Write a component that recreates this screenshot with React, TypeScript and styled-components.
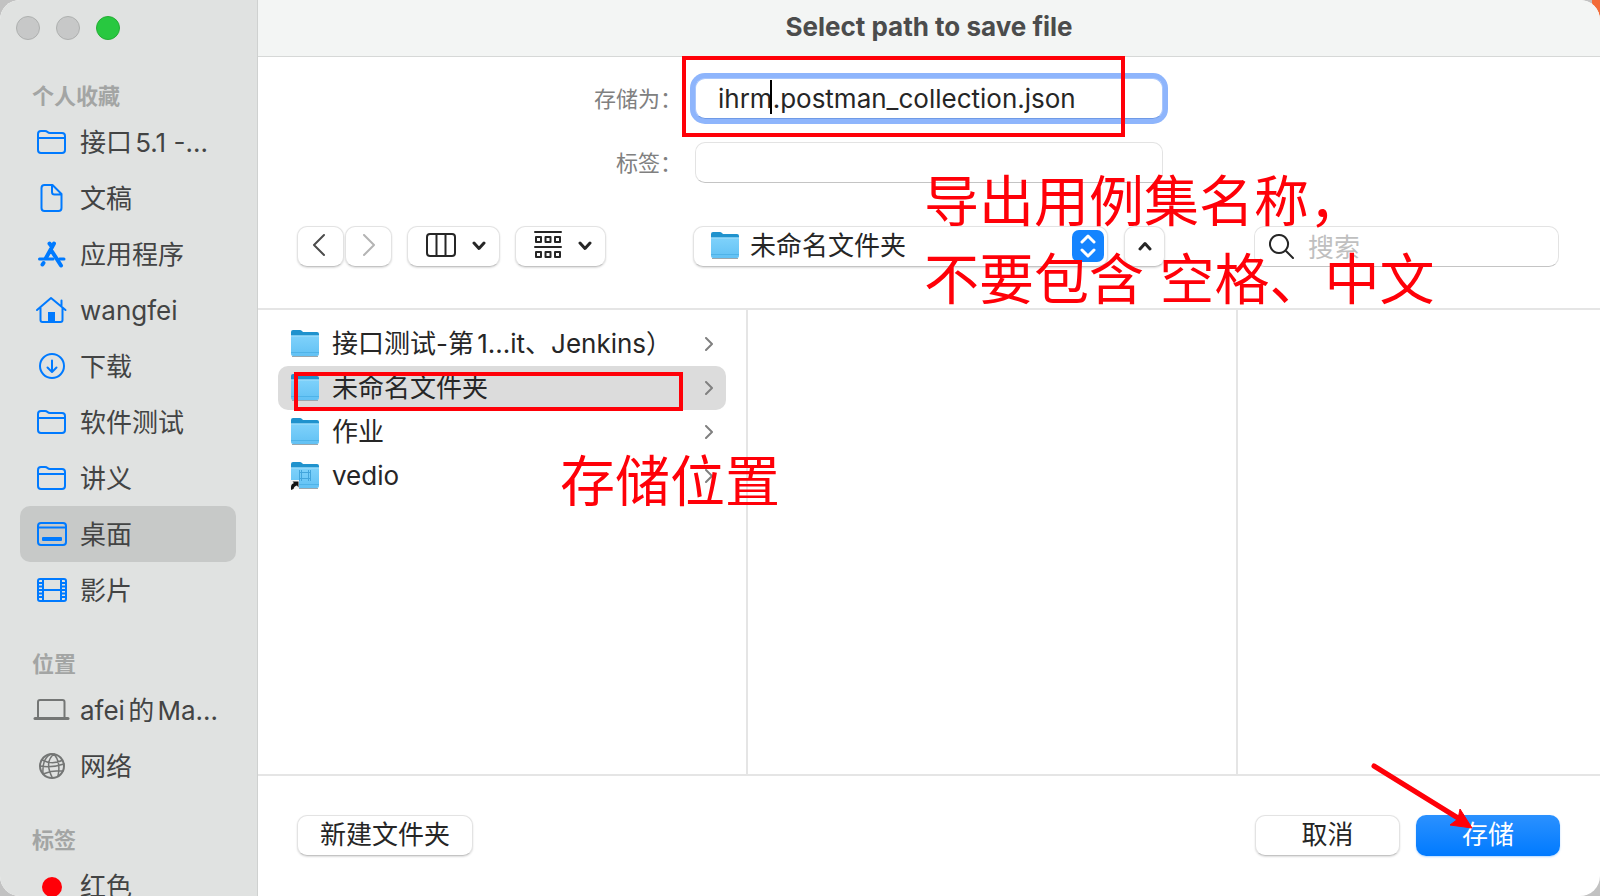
import React from 'react';
import styled, { createGlobalStyle, css } from 'styled-components';

const GlobalStyle = createGlobalStyle`
  *, *::before, *::after { box-sizing: border-box; }
  html, body, #root { height: 100%; margin: 0; }
  body {
    background: linear-gradient(#f26b38, #f26b38) top right / 8px 40px no-repeat, #c2c2c2;
    color: #262626;
    font: 400 26px/32px Inter, "Noto Sans CJK SC", sans-serif;
    text-autospace: normal;
    overflow: hidden;
  }
  button, input { font: inherit; color: inherit; }
  button { cursor: pointer; }
  ul { list-style: none; margin: 0; padding: 0; }
`;

const BLUE = '#007aff';
const RED = '#ff0008';

const Dialog = styled.div`
  display: flex;
  height: 100vh;
  min-width: 1300px;
  overflow: hidden;
  border-radius: 20px;
  background: #fff;
`;

const Sidebar = styled.nav`
  flex: none;
  width: 258px;
  height: 100%;
  overflow: hidden;
  padding: 16px 21px 0 20px;
  background: #e0e2e1;
  border-right: 1px solid #cfd1d0;
`;

const TrafficLights = styled.div`
  display: flex;
  gap: 16px;
  margin: 0 -4px;
  padding-bottom: 10px;
`;

const Light = styled.button<{ $on?: boolean }>`
  width: 24px;
  height: 24px;
  padding: 0;
  border-radius: 50%;
  border: 1px solid ${p => (p.$on ? '#24ad34' : '#aeb0af')};
  background: ${p => (p.$on ? '#28c840' : '#c7c8c8')};
`;

const SectionTitle = styled.h2`
  margin: 28px 0 0;
  padding-left: 12px;
  font-size: 22px;
  line-height: 36px;
  font-weight: 700;
  color: #a3a5a4;
`;

const Place = styled.a<{ $selected?: boolean }>`
  display: flex;
  align-items: center;
  height: 56px;
  padding-left: 12px;
  gap: 8px;
  border-radius: 10px;
  color: #434444;
  text-decoration: none;
  white-space: nowrap;
  background: ${p => (p.$selected ? '#c7c9c8' : 'transparent')};
`;

const PlaceName = styled.span`
  padding-top: 2px;
`;

const PlaceIcon = styled.svg<{ $muted?: boolean }>`
  flex: none;
  width: 40px;
  height: 40px;
  fill: none;
  stroke: ${p => (p.$muted ? '#747675' : BLUE)};
  color: ${p => (p.$muted ? '#747675' : BLUE)};
  stroke-width: 2;
  stroke-linecap: round;
  stroke-linejoin: round;
`;

const Main = styled.main`
  flex: 1;
  min-width: 0;
  display: flex;
  flex-direction: column;
`;

const TitleBar = styled.header`
  flex: none;
  display: flex;
  align-items: center;
  justify-content: center;
  height: 57px;
  padding-bottom: 2px;
  background: #f3f5f4;
  border-bottom: 1px solid #d6d8d7;
`;

const Title = styled.h1`
  margin: 0;
  font-size: 26px;
  line-height: 32px;
  font-weight: 700;
  color: #4b4c4c;
`;

const Form = styled.form`
  display: grid;
  grid-template-columns: 1fr 468px 1fr;
  row-gap: 22px;
  padding-top: 21px;
`;

const FieldLabel = styled.label`
  grid-column: 1;
  justify-self: end;
  padding-right: 13px;
  font-size: 22px;
  line-height: 42px;
  color: #808080;
`;

const Field = styled.div`
  grid-column: 2;
  position: relative;
`;

const raised = css`
  border: 1px solid #e3e3e3;
  border-bottom-color: #c4c4c4;
  border-radius: 10px;
  background: #fff;
`;

const TextInput = styled.input<{ $focused?: boolean }>`
  display: block;
  width: 100%;
  height: 41px;
  padding: 0 22px;
  ${raised}
  outline: none;
  ${p => p.$focused && css`
    border-color: #a9c6fb;
    border-bottom-color: #6f9ae6;
    box-shadow: 0 0 0 5px #8eb5fc;
  `}
`;

const Caret = styled.span`
  position: absolute;
  left: 75px;
  top: 2px;
  width: 2px;
  height: 34px;
  background: #000;
`;

const MarkBox = styled.div`
  position: absolute;
  border: 4px solid ${RED};
  pointer-events: none;
`;

const FieldMark = styled(MarkBox)`
  left: -13px;
  right: 38px;
  top: -22px;
  height: 81px;
`;

const Toolbar = styled.div`
  position: relative;
  display: grid;
  grid-template-columns: 1fr 472px 1fr;
  align-items: center;
  height: 126px;
  border-bottom: 2px solid #e5e5e5;
`;

const ToolGroup = styled.div`
  display: flex;
  gap: 15px;
  padding-left: 39px;
`;

const NavPair = styled.div`
  display: flex;
  gap: 1px;
`;

const PushButton = styled.button<{ $width: number; $primary?: boolean }>`
  display: flex;
  align-items: center;
  justify-content: center;
  width: ${p => p.$width}px;
  height: 41px;
  padding: 0;
  ${raised}
  box-shadow: 0 1px 2px rgba(0, 0, 0, 0.14);
  ${p => p.$primary && css`
    border: 0;
    color: #fff;
    background: linear-gradient(#2b91ff, ${BLUE});
    box-shadow: 0 1px 2px rgba(0, 122, 255, 0.3);
  `}
`;

const NavButton = styled(PushButton)`
  padding: 0 4px 2px 0;
`;

const MenuButton = styled(PushButton)`
  gap: 16px;
  padding: 0 0 2px 4px;
`;

const Location = styled.div`
  display: flex;
  gap: 16px;
`;

const PopUp = styled.button`
  flex: 1;
  display: flex;
  align-items: center;
  height: 41px;
  padding: 0 3px 0 16px;
  ${raised}
  box-shadow: 0 1px 2px rgba(0, 0, 0, 0.14);
`;

const PopUpLabel = styled.span`
  flex: 1;
  padding-left: 10px;
  text-align: left;
`;

const Search = styled.label`
  justify-self: end;
  display: flex;
  align-items: center;
  width: 305px;
  height: 41px;
  margin-right: 41px;
  padding: 0 14px;
  gap: 14px;
  ${raised}
`;

const SearchInput = styled.input`
  flex: 1;
  min-width: 0;
  padding: 4px 0 0;
  border: 0;
  outline: none;
  background: transparent;
  &::placeholder { color: #bfbfbf; opacity: 1; }
`;

const Browser = styled.div`
  flex: 1;
  min-height: 0;
  display: flex;
`;

const Column = styled.ul`
  && { padding: 12px 20px; }
  width: 490px;
  border-right: 2px solid #e5e5e5;
  &:last-child { flex: 1; border-right: 0; }
`;

const FileRow = styled.li<{ $selected?: boolean }>`
  position: relative;
  display: flex;
  align-items: center;
  height: 44px;
  padding: 0 13px 0 12px;
  gap: 12px;
  border-radius: 10px;
  background: ${p => (p.$selected ? '#dcdcdc' : 'transparent')};
`;

const FileName = styled.span`
  flex: 1;
  white-space: nowrap;
`;

const RowMark = styled(MarkBox)`
  left: 16px;
  right: 43px;
  top: 6px;
  height: 39px;
`;

const Note = styled.p<{ $left: number; $top: number }>`
  position: absolute;
  z-index: 1;
  left: ${p => p.$left}px;
  top: ${p => p.$top}px;
  margin: 0;
  font-size: 55px;
  line-height: 78px;
  color: ${RED};
  white-space: nowrap;
  pointer-events: none;
`;

const Footer = styled.footer`
  flex: none;
  display: flex;
  align-items: center;
  gap: 16px;
  height: 122px;
  padding: 0 40px 2px 39px;
  border-top: 2px solid #e5e5e5;
`;

const Spacer = styled.div`
  flex: 1;
`;

const SaveSlot = styled.div`
  position: relative;
`;

const Arrow = styled.svg`
  position: absolute;
  left: -50px;
  top: -57px;
  width: 110px;
  height: 76px;
  pointer-events: none;
`;

const FolderOutline = () => (
  <PlaceIcon viewBox="0 0 40 40">
    <path d="M6 28V12q0-3 3-3h4q1.500 0 2.500 1t2.500 1h12q3 0 3 3v14q0 3-3 3h-21q-3 0-3-3zM6 16h27" />
  </PlaceIcon>
);

const DocIcon = () => (
  <PlaceIcon viewBox="0 0 40 40">
    <path d="M12.500 7h8l9 9V30q0 3-3 3h-14q-3 0-3-3V10q0-3 3-3zM20 7.500V14q0 2.500 2.500 2.500H29" />
  </PlaceIcon>
);

const AppsIcon = () => (
  <PlaceIcon viewBox="0 0 40 40">
    <path d="M17.500 9.500l1.500 2M22 9.500L14 24M20 17.500l9 14M11.500 29l-1 1.500" style={{ strokeWidth: 4 }} />
    <path d="M7.500 25h13.500M27.500 25h4.500" style={{ strokeWidth: 3 }} />
  </PlaceIcon>
);

const HomeIcon = () => (
  <PlaceIcon viewBox="0 0 40 40">
    <path d="M5 20L19 8l14.500 12M8.500 18v12q0 2 2 2h18q2 0 2-2V18M29.500 10.500v5" />
    <path d="M16 22h7v10h-7z" fill="currentColor" stroke="none" />
  </PlaceIcon>
);

const DownloadIcon = () => (
  <PlaceIcon viewBox="0 0 40 40">
    <circle cx="20" cy="20" r="12" />
    <path d="M20 14.500v11M15.500 21.500L20 26l4.500-4.500" />
  </PlaceIcon>
);

const DesktopIcon = () => (
  <PlaceIcon viewBox="0 0 40 40">
    <rect x="6" y="9" width="28" height="22" rx="3" />
    <path d="M6 13.500h28" />
    <rect x="10" y="23" width="20" height="4" rx="1" fill="currentColor" stroke="none" />
  </PlaceIcon>
);

const MoviesIcon = () => (
  <PlaceIcon viewBox="0 0 40 40">
    <rect x="6" y="9" width="28" height="22" rx="2" />
    <path d="M11 9v22M29 9v22M11 20h18M6 13h5M6 16.500h5M6 20h5M6 23.500h5M6 27h5M29 13h5M29 16.500h5M29 20h5M29 23.500h5M29 27h5" />
  </PlaceIcon>
);

const LaptopIcon = () => (
  <PlaceIcon viewBox="0 0 40 40" $muted>
    <path d="M6 28V12q0-2 2-2h22.500q2 0 2 2v16" />
    <path d="M3 28.500h33" style={{ strokeWidth: 3 }} />
  </PlaceIcon>
);

const GlobeIcon = () => (
  <PlaceIcon viewBox="0 0 40 40" $muted>
    <circle cx="20" cy="20" r="12" />
    <path d="M22 8q-10 8-1.500 24M22 8q7 8 4 22M19 8q-9 4-8 19.500M10 14q10 5 20 0.500M8 20q12 2 24-2M11 28q10-4 20-3" style={{ strokeWidth: 1.5 }} />
  </PlaceIcon>
);

const TagDot = () => (
  <PlaceIcon viewBox="0 0 40 40">
    <circle cx="20" cy="21" r="10" fill={RED} stroke="none" />
  </PlaceIcon>
);

const FolderSvg = styled.svg`
  flex: none;
  width: 30px;
  height: 30px;
`;

const Folder = ({ alias }: { alias?: boolean }) => (
  <FolderSvg viewBox="0 0 30 30">
    <defs>
      <linearGradient id="folder-front" x1="0" y1="0" x2="0" y2="1">
        <stop offset="0" stopColor="#7fd2fb" />
        <stop offset="1" stopColor="#62c1f4" />
      </linearGradient>
    </defs>
    <path d="M1 3q0-2 2-2h7q1 0 2 1l1 1h14q2 0 2 2v4H1z" fill="#1f92cd" />
    <path d="M2 27h26v1H2z" fill="#9aa7ae" />
    <path d="M1 6.500h28V25q0 2-2 2H3q-2 0-2-2z" fill="url(#folder-front)" />
    <path d="M1 6.500h28v1H1z" fill="#a4defb" />
    <path d="M1 23.500h28" stroke="#4fb3e8" />
    {alias && (
      <>
        <path d="M9.500 9v11M20.500 9v11M9.500 11.500h11M9.500 17.500h11M11.500 9v11M18.500 9v11" fill="none" stroke="#43a5dc" />
        <path d="M0 19h9v9H0z" fill="#f4f4f4" />
        <path d="M1 29v-3q0-3 3-4l-1.500-1.500H8.500v6L7 24.500q-3 .5-3.500 3.500z" fill="#111" />
      </>
    )}
  </FolderSvg>
);

const Glyph = ({ d, w, h, color = '#262626', stroke = 2 }: { d: string; w: number; h: number; color?: string; stroke?: number }) => (
  <svg width={w} height={h} viewBox={`0 0 ${w} ${h}`} fill="none" stroke={color} strokeWidth={stroke} strokeLinecap="round" strokeLinejoin="round">
    <path d={d} />
  </svg>
);

const DownChevron = () => <Glyph d="M2 4l5 5.500L12 4" w={14} h={12} stroke={3} />;

const favourites = [
  { name: '接口5.1 -...', Icon: FolderOutline },
  { name: '文稿', Icon: DocIcon },
  { name: '应用程序', Icon: AppsIcon },
  { name: 'wangfei', Icon: HomeIcon },
  { name: '下载', Icon: DownloadIcon },
  { name: '软件测试', Icon: FolderOutline },
  { name: '讲义', Icon: FolderOutline },
  { name: '桌面', Icon: DesktopIcon, selected: true },
  { name: '影片', Icon: MoviesIcon },
];

const sections = [
  { title: '个人收藏', places: favourites },
  { title: '位置', places: [{ name: 'afei的Ma...', Icon: LaptopIcon }, { name: '网络', Icon: GlobeIcon }] },
  { title: '标签', places: [{ name: '红色', Icon: TagDot }] },
];

const files = [
  { name: '接口测试-第1...it、Jenkins）' },
  { name: '未命名文件夹', selected: true },
  { name: '作业' },
  { name: 'vedio', alias: true },
];

export default function App() {
  return (
    <>
      <GlobalStyle />
      <Dialog role="dialog" aria-labelledby="dialog-title">
        <Sidebar>
          <TrafficLights>
            <Light aria-label="关闭" />
            <Light aria-label="最小化" />
            <Light aria-label="缩放" $on />
          </TrafficLights>
          {sections.map(section => (
            <section key={section.title}>
              <SectionTitle>{section.title}</SectionTitle>
              <ul>
                {section.places.map(({ name, Icon, selected }: any) => (
                  <li key={name}>
                    <Place href="#" $selected={selected}>
                      <Icon />
                      <PlaceName>{name}</PlaceName>
                    </Place>
                  </li>
                ))}
              </ul>
            </section>
          ))}
        </Sidebar>
        <Main>
          <TitleBar>
            <Title id="dialog-title">Select path to save file</Title>
          </TitleBar>
          <Form onSubmit={e => e.preventDefault()}>
            <FieldLabel htmlFor="file-name">存储为：</FieldLabel>
            <Field>
              <TextInput id="file-name" type="text" defaultValue="ihrm.postman_collection.json" $focused spellCheck={false} />
              <Caret />
              <FieldMark />
            </Field>
            <FieldLabel htmlFor="tags">标签：</FieldLabel>
            <Field>
              <TextInput id="tags" type="text" />
            </Field>
          </Form>
          <Toolbar>
            <ToolGroup>
              <NavPair>
                <NavButton $width={47} aria-label="后退">
                  <Glyph d="M12 2L2 12l10 10" w={14} h={24} color="#4c4c4c" />
                </NavButton>
                <PushButton $width={47} aria-label="前进">
                  <Glyph d="M2 1l10 10L2 21" w={14} h={24} color="#b4b4b4" />
                </PushButton>
              </NavPair>
              <MenuButton $width={93} aria-label="分栏显示">
                <Glyph d="M4 1h22q3 0 3 3v16q0 3-3 3H4q-3 0-3-3V4q0-3 3-3zM10.500 1v22M19.500 1v22" w={30} h={24} />
                <DownChevron />
              </MenuButton>
              <MenuButton $width={91} aria-label="分组">
                <Glyph d="M1 1h26M1 16h26M2 6h5v5H2zM11.500 6h5v5h-5zM21 6h5v5h-5zM2 21h5v5H2zM11.500 21h5v5h-5zM21 21h5v5h-5z" w={28} h={28} />
                <DownChevron />
              </MenuButton>
            </ToolGroup>
            <Location>
              <PopUp aria-haspopup="listbox">
                <Folder />
                <PopUpLabel>未命名文件夹</PopUpLabel>
                <svg width="32" height="32" viewBox="0 0 32 32">
                  <rect width="32" height="32" rx="7" fill="#1484ff" />
                  <path d="M10 12l6-6 6 6M10 20l6 6 6-6" fill="none" stroke="#fff" strokeWidth="3" strokeLinecap="round" strokeLinejoin="round" />
                </svg>
              </PopUp>
              <PushButton $width={41} aria-label="收起">
                <Glyph d="M2 9l5-5.500L12 9" w={14} h={12} stroke={3} />
              </PushButton>
            </Location>
            <Search>
              <Glyph d="M10 1a9 9 0 1 0 .01 0M16.500 16.500L24 24" w={25} h={25} stroke={2} />
              <SearchInput type="search" placeholder="搜索" aria-label="搜索" />
            </Search>
            <Note $left={666} $top={-22}>
              导出用例集名称，
              <br />
              不要包含 空格、中文
            </Note>
          </Toolbar>
          <Browser>
            <Column>
              {files.map(file => (
                <FileRow key={file.name} $selected={file.selected}>
                  <Folder alias={file.alias} />
                  <FileName>{file.name}</FileName>
                  <Glyph d="M1 1l6 6-6 6" w={8} h={14} color="#808080" />
                  {file.selected && <RowMark />}
                  {file.alias && <Note $left={282} $top={-12}>存储位置</Note>}
                </FileRow>
              ))}
            </Column>
            <Column />
            <Column />
          </Browser>
          <Footer>
            <PushButton $width={176}>新建文件夹</PushButton>
            <Spacer />
            <PushButton $width={145}>取消</PushButton>
            <SaveSlot>
              <PushButton $width={144} $primary>存储</PushButton>
              <Arrow viewBox="0 0 110 76">
                <path d="M8 8L92 60" fill="none" stroke={RED} strokeWidth="5" strokeLinecap="round" />
                <path d="M106 70L84 67l8-6 2-10z" fill={RED} stroke={RED} />
              </Arrow>
            </SaveSlot>
          </Footer>
        </Main>
      </Dialog>
    </>
  );
}
